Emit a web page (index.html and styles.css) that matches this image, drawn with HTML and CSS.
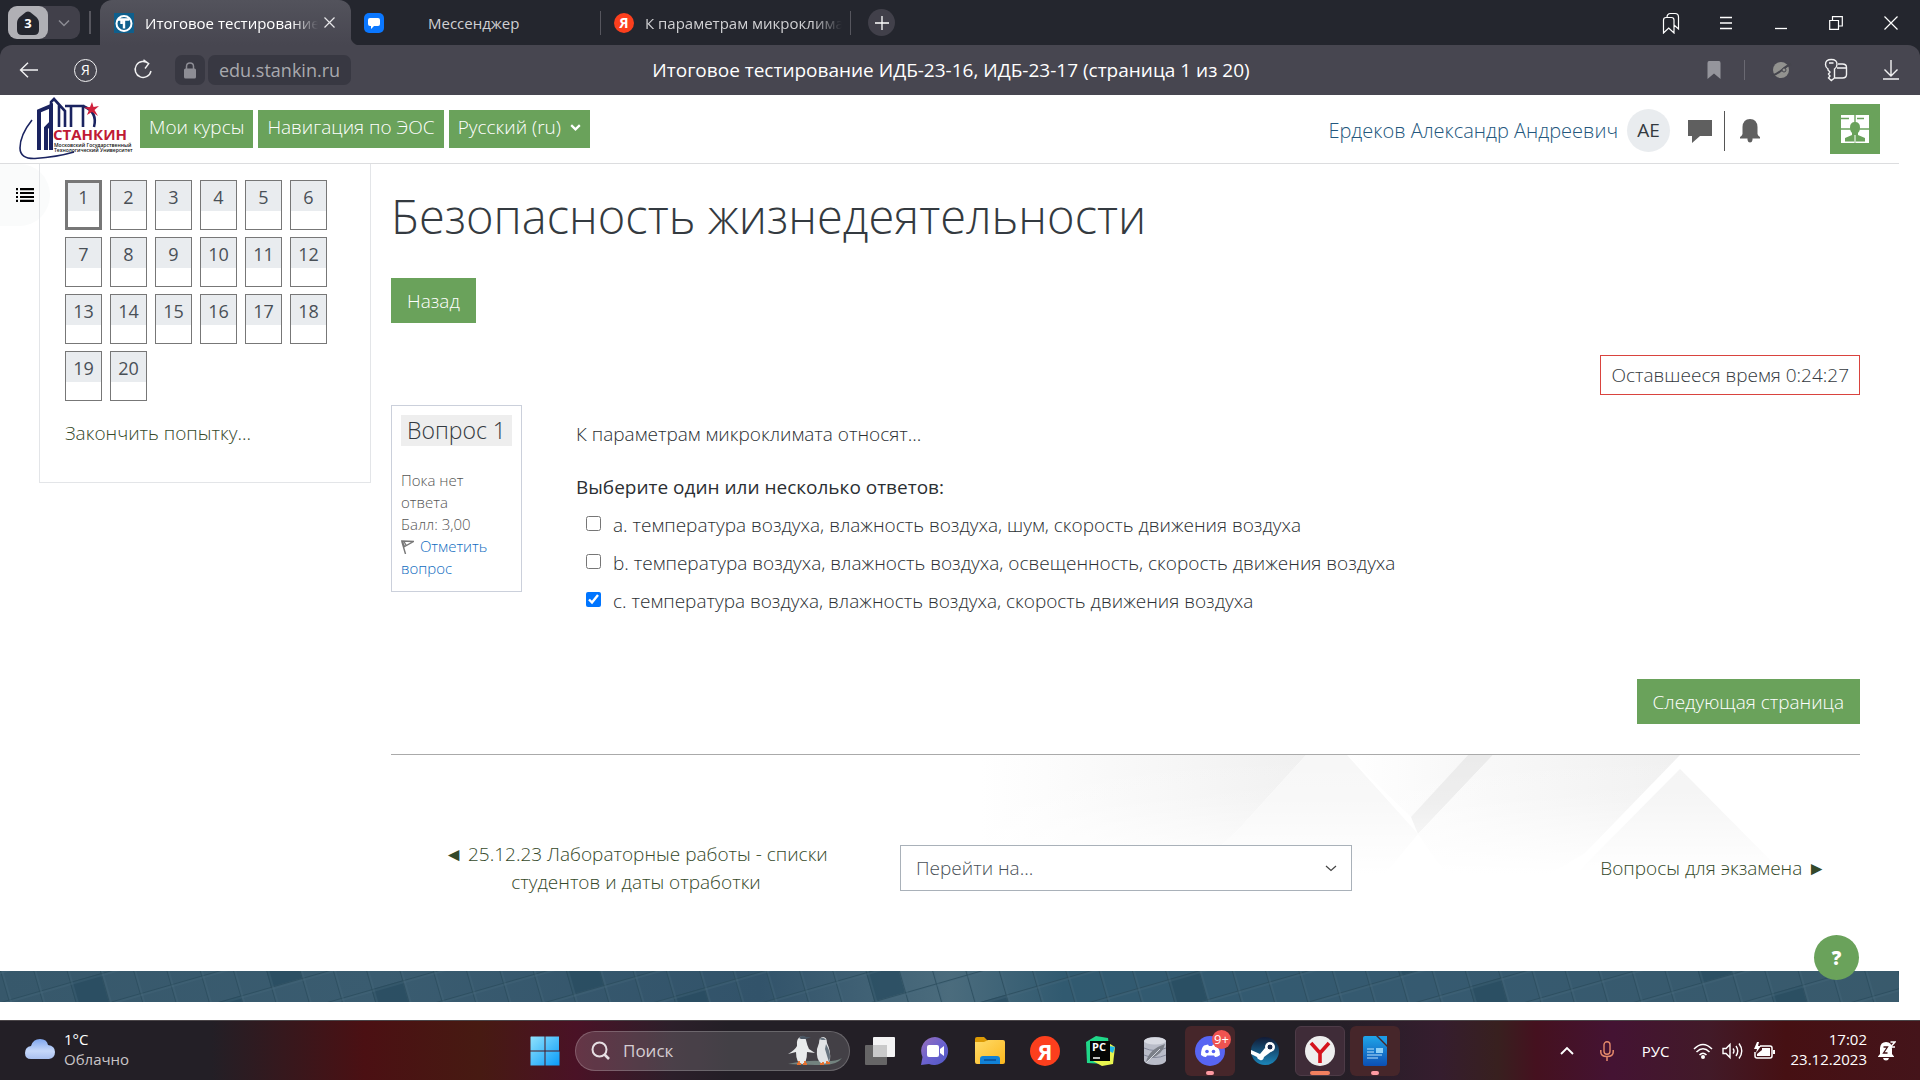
FILE: index.html
```html
<!DOCTYPE html>
<html lang="ru">
<head>
<meta charset="utf-8">
<meta name="viewport" content="width=device-width, initial-scale=1">
<title>Итоговое тестирование ИДБ-23-16, ИДБ-23-17 (страница 1 из 20)</title>
<link rel="stylesheet" href="styles.css">
</head>
<body>
<header class="browser">
  <div class="tabstrip">
    <div class="tab-group">
      <button class="tab-count" aria-label="Группы вкладок">
        <svg width="22" height="24" viewBox="0 0 22 24"><path d="M4 5 9 1Q11 0 13 1L18 5Q22 8 22 12V19Q22 24 17 24H5Q0 24 0 19V12Q0 8 4 5Z" fill="#24262e"/></svg>
        <span class="tab-number">3</span>
      </button>
      <button class="tab-more" aria-label="Список вкладок"><svg width="12" height="8" viewBox="0 0 12 8"><path d="M1 1.5 6 6.5 11 1.5" fill="none" stroke="#8b8b93" stroke-width="1.5"/></svg></button>
    </div>
    <span class="strip-line"></span>
    <div class="tab tab-active">
      <svg width="20" height="20" viewBox="0 0 20 20"><rect width="20" height="20" fill="#0f5f8c"/><circle cx="10" cy="10.500" r="7.500" fill="none" stroke="#fff" stroke-width="2"/><path d="M4 6.500H15M10 6.500V15.500M7.500 6.500V11" stroke="#fff" stroke-width="2.400" fill="none"/></svg>
      <span class="tab-title">Итоговое тестирование</span>
      <button class="tab-close" aria-label="Закрыть вкладку"><svg width="11" height="11" viewBox="0 0 11 11"><path d="M.5.5 10.500 10.500M10.500.5.5 10.500" stroke="#e8e8ea" stroke-width="1.200"/></svg></button>
    </div>
    <div class="tab tab-chat">
      <svg width="20" height="20" viewBox="0 0 20 20"><rect width="20" height="20" rx="5" fill="#0a77ff"/><path d="M6 5H14Q16 5 16 7V11Q16 13 14 13H10L7 16V13H6Q4 13 4 11V7Q4 5 6 5Z" fill="#fff"/></svg>
      <span class="tab-title">Мессенджер</span>
    </div>
    <div class="tab tab-search">
      <span class="ya-dot">Я</span>
      <span class="tab-title">К параметрам микроклимата</span>
    </div>
    <button class="tab-new" aria-label="Новая вкладка"><svg width="14" height="14" viewBox="0 0 14 14"><path d="M7 0V14M0 7H14" stroke="#fff" stroke-width="1.300"/></svg></button>
    <div class="window-buttons">
      <button aria-label="Коллекции"><svg width="18" height="22" viewBox="0 0 18 22"><path d="M1.500 21V8Q1.500 5.500 4 5.500H9.500Q12 5.500 12 8V21L6.700 16ZM5 5.500Q5 1.500 8.500 1.500H13Q16.500 1.500 16.500 5V17L12 13" fill="none" stroke="#fff" stroke-width="1.200"/></svg></button>
      <button aria-label="Меню"><svg width="14" height="14" viewBox="0 0 14 14"><path d="M1 1.500H13M1 7H13M1 12.500H13" stroke="#fff" stroke-width="1.300"/></svg></button>
      <button aria-label="Свернуть"><svg width="14" height="14" viewBox="0 0 14 14"><path d="M1 12.500H13" stroke="#fff" stroke-width="1.300"/></svg></button>
      <button aria-label="Развернуть"><svg width="14" height="14" viewBox="0 0 14 14"><path d="M.7 4.500H9.500V13.300H.7ZM3.500 4V.7H13.300V10H10" fill="none" stroke="#fff" stroke-width="1.200"/></svg></button>
      <button aria-label="Закрыть"><svg width="14" height="14" viewBox="0 0 14 14"><path d="M.5.5 13.500 13.500M13.500.5.5 13.500" stroke="#fff" stroke-width="1.200"/></svg></button>
    </div>
  </div>
  <div class="toolbar">
    <div class="tool-left">
      <div class="nav-buttons">
        <button aria-label="Назад"><svg width="20" height="16" viewBox="0 0 20 16"><path d="M19 8H1.500M9 .7 1.500 8 9 15.300" fill="none" stroke="#f2f2f3" stroke-width="1.400"/></svg></button>
        <button aria-label="Яндекс"><span class="ya-ring">Я</span></button>
        <button aria-label="Обновить"><svg width="20" height="22" viewBox="0 0 20 22"><path d="M15.500 4.500A8 8 0 1 0 18 12M10.500.7 15.700 4.700 12 9.500" fill="none" stroke="#f2f2f3" stroke-width="1.400"/></svg></button>
      </div>
      <div class="address">
        <span class="lock"><svg width="14" height="17" viewBox="0 0 14 17"><path d="M3.500 7V4.500Q3.500 1 7 1T10.500 4.500V7" fill="none" stroke="#8d8d95" stroke-width="1.500"/><rect x="1" y="6.500" width="12" height="10" rx="1.500" fill="#8d8d95"/></svg></span>
        <a class="host" href="#">edu.stankin.ru</a>
      </div>
    </div>
    <div class="page-title">Итоговое тестирование ИДБ-23-16, ИДБ-23-17 (страница 1 из 20)</div>
    <div class="tool-buttons">
      <button class="mark" aria-label="Закладка"><svg width="14" height="18" viewBox="0 0 14 18"><path d="M2 0H12Q13.500 0 13.500 2V18L7 12.500.5 18V2Q.5 0 2 0Z" fill="#95959c"/></svg></button>
      <span class="tool-line"></span>
      <button aria-label="Режим"><svg width="22" height="18" viewBox="0 0 22 18"><circle cx="11" cy="9" r="8" fill="#92928f"/><path d="M1 15Q6 14 12 9T21 3" fill="none" stroke="#45454d" stroke-width="2"/><circle cx="14" cy="9" r="2" fill="#92928f" stroke="#45454d"/></svg></button>
      <button aria-label="Пароли"><svg width="24" height="24" viewBox="0 0 24 24"><path d="M4 11Q1.500 9.500 1.500 6.500 1.500 1.500 7.300 1.500T13 6.500Q13 9.500 10.500 11V20L7.300 22.500 4.500 20 6 18 4.500 16 6 14 4 12ZM5 5H9.500M14 6H18.500Q22.500 6 22.500 9.500V16.500Q22.500 20 18.500 20H11M13 10H22.500" fill="none" stroke="#f2f2f3" stroke-width="1.400"/></svg></button>
      <button aria-label="Загрузки"><svg width="16" height="20" viewBox="0 0 16 20"><path d="M8 0V15.500M1.500 9.500 8 16 14.500 9.500M0 19H16" fill="none" stroke="#f2f2f3" stroke-width="1.400"/></svg></button>
    </div>
  </div>
</header>

<div class="site">
  <nav class="navbar">
    <a class="logo" href="#" aria-label="Станкин">
      <svg width="114" height="64" viewBox="0 0 114 64">
        <path d="M13 23Q1 38 1 51 1 62 16 61.500 38 60 55 55" fill="none" stroke="#1a2360" stroke-width="1.600"/>
        <path d="M20 53V14L32 9V53M32 26 27 31V53" fill="none" stroke="#1a2360" stroke-width="4"/>
        <path d="M32 9V5L35 2 46 14V30M40 8V30M52 9V30M46 9H64V30" fill="none" stroke="#1a2360" stroke-width="2.600"/>
        <path d="M64 9Q79 15 75 30" fill="none" stroke="#1a2360" stroke-width="2.500"/>
        <path d="M73 5 74.500 10 80 9 75.500 13 79 19 73 15 68 18 70 13 65 10.500 71 10Z" fill="#d0213c"/>
        <text class="logo-name" x="34" y="43" fill="#c01a35">СТАНКИН</text>
        <text class="logo-sub" x="35" y="50" fill="#111">Московский Государственный</text>
        <text class="logo-sub" x="35" y="55" fill="#111">Технологический Университет</text>
      </svg>
    </a>
    <div class="menu">
      <a class="menu-item" href="#">Мои курсы</a>
      <a class="menu-item" href="#">Навигация по ЭОС</a>
      <button class="menu-item">Русский (ru)<svg width="11" height="7" viewBox="0 0 11 7"><path d="M1.200 1.200 5.500 5.300 9.800 1.200" fill="none" stroke="#fff" stroke-width="2.300"/></svg></button>
    </div>
    <div class="user">
      <a class="user-name" href="#">Ердеков Александр Андреевич</a>
      <span class="avatar">АЕ</span>
      <button class="user-icon" aria-label="Сообщения"><svg width="24" height="24" viewBox="0 0 24 24"><path d="M0 1H24V17H12L4 24V17H0Z" fill="#5f5f5f"/></svg></button>
      <span class="user-line"></span>
      <button class="user-icon" aria-label="Уведомления"><svg width="20" height="24" viewBox="0 0 20 24"><path d="M10 0Q17 0 17.500 8V15Q18 17 20 18V19.500H12.500V21Q12 23.500 10 23.500T7.500 21V19.500H0V18Q2 17 2.500 15V8Q3 0 10 0Z" fill="#5f5f5f"/></svg></button>
    </div>
    <button class="badge" aria-label="Профиль"><svg width="28" height="28" viewBox="0 0 28 28"><rect width="28" height="28" fill="#fff"/><path d="M14 0V28M0 14H28M0 3.500H8M16 3.500H23" stroke="#6aa25b" stroke-width="1.400"/><path d="M14 7Q19 7 19 12.500 19 16 17 18V20L24 23V26.500H4V23L11 20V18Q9 16 9 12.500 9 7 14 7Z" fill="#6aa25b"/><path d="M14 20V28" stroke="#fff"/></svg></button>
  </nav>

  <div class="columns">
    <button class="drawer" aria-label="Открыть панель"><svg width="18" height="14" viewBox="0 0 18 14"><path d="M0 1.200H2M0 5H2M0 9H2M0 12.800H2M4 1.200H18M4 5H18M4 9H18M4 12.800H18" stroke="#000" stroke-width="2.200"/></svg></button>
    <aside class="quiz-nav">
      <div class="quiz-grid">
        <a class="num current" href="#">1</a><a class="num" href="#">2</a><a class="num" href="#">3</a><a class="num" href="#">4</a><a class="num" href="#">5</a><a class="num" href="#">6</a>
        <a class="num" href="#">7</a><a class="num" href="#">8</a><a class="num" href="#">9</a><a class="num" href="#">10</a><a class="num" href="#">11</a><a class="num" href="#">12</a>
        <a class="num" href="#">13</a><a class="num" href="#">14</a><a class="num" href="#">15</a><a class="num" href="#">16</a><a class="num" href="#">17</a><a class="num" href="#">18</a>
        <a class="num" href="#">19</a><a class="num" href="#">20</a>
      </div>
      <a class="finish" href="#">Закончить попытку...</a>
    </aside>

    <main class="content">
      <h1>Безопасность жизнедеятельности</h1>
      <button class="btn">Назад</button>
      <div class="timer">Оставшееся время 0:24:27</div>
      <form class="question">
        <div class="info">
          <h2>Вопрос 1</h2>
          <p>Пока нет ответа</p>
          <p>Балл: 3,00</p>
          <a href="#"><svg width="13" height="14" viewBox="0 0 13 14"><path d="M.7 1 4.500 14M1 1 12.500 1.500 3.500 6.500ZM2.500 1 5 5" fill="none" stroke="#777" stroke-width="1.400"/></svg> Отметить вопрос</a>
        </div>
        <fieldset class="answers">
          <legend>К параметрам микроклимата относят...</legend>
          <p class="prompt">Выберите один или несколько ответов:</p>
          <label><input type="checkbox"><span>a. температура воздуха, влажность воздуха, шум, скорость движения воздуха</span></label>
          <label><input type="checkbox"><span>b. температура воздуха, влажность воздуха, освещенность, скорость движения воздуха</span></label>
          <label><input type="checkbox" checked><span>c. температура воздуха, влажность воздуха, скорость движения воздуха</span></label>
        </fieldset>
      </form>
      <div class="next"><button class="btn">Следующая страница</button></div>
      <div class="activity">
        <svg class="facets" width="880" height="216" viewBox="0 0 880 216">
          <defs>
            <linearGradient id="fade-right"><stop offset="0" stop-color="#f0f0f0" stop-opacity="0"/><stop offset="1" stop-color="#f0f0f0"/></linearGradient>
            <linearGradient id="band"><stop offset="0" stop-color="#fbfbfb"/><stop offset="1" stop-color="#f0f0f0"/></linearGradient>
            <linearGradient id="veil" x2="0" y2="1"><stop offset="0" stop-color="#fff" stop-opacity="0"/><stop offset=".2" stop-color="#fff" stop-opacity=".15"/><stop offset=".55" stop-color="#fff"/></linearGradient>
          </defs>
          <path d="M0 0H326L259 74 210 120H0Z" fill="url(#fade-right)"/>
          <path d="M326 0H367L438 79 400 125H205L259 74Z" fill="#f7f7f7"/>
          <path d="M367 0H488L431 62Z" fill="url(#fade-right)" opacity=".5"/>
          <path d="M488 0H513L438 79 431 62Z" fill="#ebebeb"/>
          <path d="M513 0H700L605 98 560 125 470 125 438 79Z" fill="url(#band)"/>
          <path d="M700 14 800 115 600 115Z" fill="#f4f4f4"/>
          <rect width="880" height="216" fill="url(#veil)"/>
        </svg>
        <a class="prev-link" href="#">◄ 25.12.23 Лабораторные работы - списки студентов и даты отработки</a>
        <div class="jump"><select aria-label="Перейти на"><option>Перейти на...</option></select><svg width="12" height="7" viewBox="0 0 12 7"><path d="M1 1 6 5.500 11 1" fill="none" stroke="#444" stroke-width="1.200"/></svg></div>
        <a class="next-link" href="#">Вопросы для экзамена ►</a>
      </div>
    </main>
  </div>
  <footer class="footer">
    <svg width="100%" height="31">
      <defs>
        <linearGradient id="sea"><stop offset="0" stop-color="#37586b"/><stop offset=".2" stop-color="#3a5c70"/><stop offset=".4" stop-color="#32536a"/><stop offset=".5" stop-color="#4b6c7d"/><stop offset=".56" stop-color="#315a70"/><stop offset=".75" stop-color="#365a70"/><stop offset="1" stop-color="#395a6c"/></linearGradient>
        <pattern id="tiles" width="32" height="30" patternUnits="userSpaceOnUse" patternTransform="rotate(-16)"><path d="M0 .7H32M.7 0V30" stroke="#2b4c5d" stroke-width="1"/><path d="M0 2H32M2 0V30" stroke="#4a6c7d" stroke-width=".6"/></pattern>
        <pattern id="wells" width="288" height="90" patternUnits="userSpaceOnUse" patternTransform="rotate(-16)"><path d="M64 30H96V60H64ZM192 0H224V30H192ZM256 60H288V90H256Z" fill="#274a5e" opacity=".75"/></pattern>
      </defs>
      <rect width="100%" height="31" fill="url(#sea)"/><rect width="100%" height="31" fill="url(#wells)"/><rect width="100%" height="31" fill="url(#tiles)"/>
    </svg>
    <button class="help" aria-label="Помощь">?</button>
  </footer>
</div>

<div class="taskbar">
  <a class="weather" href="#">
    <svg width="30" height="20" viewBox="0 0 30 20"><defs><linearGradient id="cloud" x2="0" y2="1"><stop offset="0" stop-color="#7fa6ee"/><stop offset=".6" stop-color="#c6d8fa"/><stop offset="1" stop-color="#a9c0ef"/></linearGradient></defs><path d="M6 20Q0 20 0 14T6 7Q8 0 15 0T23 6Q30 7 30 13T24 20Z" fill="url(#cloud)"/></svg>
    <span class="weather-text"><b>1°C</b><i>Облачно</i></span>
  </a>
  <div class="apps">
    <button class="app" aria-label="Пуск"><svg width="30" height="30" viewBox="0 0 30 30"><defs><linearGradient id="win" x2="1" y2="1"><stop offset="0" stop-color="#8fe2fd"/><stop offset="1" stop-color="#0a9bf8"/></linearGradient></defs><path d="M1 .5H14.500V14.500H.5V1ZM15.500.5H29V14.500H15.500ZM.5 15.500H14.500V29.500H.5ZM15.500 15.500H29.500V29.500H15.500Z" fill="url(#win)"/></svg></button>
    <label class="search">
      <svg width="20" height="20" viewBox="0 0 20 20"><circle cx="8.500" cy="8.500" r="7" fill="none" stroke="#e6dfe3" stroke-width="2"/><path d="M13.500 13.500 18 18" stroke="#e6dfe3" stroke-width="2.600"/></svg>
      <input type="text" placeholder="Поиск" aria-label="Поиск">
      <svg width="56" height="32" viewBox="0 0 56 32"><path d="M1 29Q20 25 34 26T55 23Q50 30 36 30T1 29Z" fill="#73837f"/><path d="M10 11Q9 3 14 1.500L18 2 19 5Q20 10 22 14L28 18 20 17Q20 28 15.500 29 9 29 9 17L1 19Q8 15 10 11Z" fill="#e9ebec"/><path d="M12 3Q15-1 19 2L24 2 19 4 14 4Z" fill="#4a5663"/><path d="M32 8Q32 2 36 2T40 8Q44 16 43 25 40 30 34 28 29 25 30 14Z" fill="#e2e4e6"/><path d="M39 9Q45 19 42 27 40 21 38 14ZM32 4Q36 1 39 5L35 5Z" fill="#68747f"/><path d="M10 29H14M16 29H20M33 29H37M39 28H43M12 26V29M18 26V29M36 27V29M40 26V28" stroke="#e5702f" stroke-width="1.800"/></svg>
    </label>
    <button class="app" aria-label="Представление задач"><svg width="30" height="28" viewBox="0 0 30 28"><rect x="8" width="22" height="20" rx="1" fill="#f3f3f4"/><rect y="8" width="22" height="20" rx="1" fill="#777" opacity=".8"/><rect x="8" y="8" width="14" height="12" fill="#c9c9ca"/></svg></button>
    <button class="app" aria-label="Чат"><svg width="30" height="28" viewBox="0 0 30 28"><defs><linearGradient id="chat" x2="1" y2="1"><stop offset="0" stop-color="#9a6fb8"/><stop offset=".5" stop-color="#6c62cf"/><stop offset="1" stop-color="#4f57c4"/></linearGradient></defs><path d="M15 0A14 14 0 1 1 9 27L1 28 2.500 20A14 14 0 0 1 15 0Z" fill="url(#chat)"/><rect x="7" y="8" width="12" height="12" rx="2" fill="#fff"/><path d="M20 12 24 9V19L20 16Z" fill="#fff"/></svg></button>
    <button class="app" aria-label="Проводник"><svg width="30" height="27" viewBox="0 0 30 27"><defs><linearGradient id="folder" x2="1" y2="1"><stop offset="0" stop-color="#ffdb69"/><stop offset="1" stop-color="#fbb71d"/></linearGradient></defs><path d="M0 2Q0 0 2 0H9L13 4V8H0Z" fill="#dc9a05"/><path d="M0 5H9L13 3H28Q30 3 30 5V25Q30 27 28 27H2Q0 27 0 25Z" fill="url(#folder)"/><path d="M5 27V22Q5 19 8 19H22Q25 19 25 22V27Z" fill="#1181d6"/><path d="M9 23H21" stroke="#0a4d92" stroke-width="1.500"/></svg></button>
    <button class="app" aria-label="Яндекс"><span class="ya-big">Я</span></button>
    <button class="app" aria-label="PyCharm"><svg width="30" height="30" viewBox="0 0 30 30"><path d="M1 6 11 0 23 2 24 11 20 28 2 27Z" fill="#20d789"/><path d="M22 6 30 11 28 28 17 30 8 25Z" fill="#e9f650"/><path d="M24 10 30 11 28 17 24 15Z" fill="#1db8e8"/><rect x="5" y="5" width="20" height="20" fill="#050505"/><path d="M8 22H15" stroke="#fff" stroke-width="1.500"/><text class="pc" x="7" y="15" fill="#fff">PC</text></svg></button>
    <button class="app" aria-label="SQLite"><svg width="24" height="28" viewBox="0 0 24 28"><path d="M1 4V24Q3 28 12 28T23 24V4Q21 0 12 0T1 4Z" fill="#b9bcc8"/><ellipse cx="12" cy="4" rx="11" ry="3.500" fill="#d8dae2"/><path d="M1 11Q12 16 23 11M1 18Q12 23 23 18" fill="none" stroke="#83879a"/><path d="M3 25Q6 12 22 7 20 17 7 22Z" fill="#7b7f88"/><path d="M3 26 17 12" stroke="#d5d8e0"/></svg></button>
    <button class="app app-warm" aria-label="Discord"><svg width="30" height="30" viewBox="0 0 30 30"><circle cx="15" cy="15" r="15" fill="#5865f2"/><path d="M6 19Q6 12 9 9.500L13 8.500 14 10H17L18 8.500 21 9.500Q25 13 25 19 22 21.500 20 21L19 19.500H12L11 21Q9 21.500 6 19Z" fill="#fff"/><circle cx="12" cy="15.500" r="1.800" fill="#5865f2"/><circle cx="18.500" cy="15.500" r="1.800" fill="#5865f2"/></svg><span class="count">9+</span></button>
    <button class="app" aria-label="Steam"><svg width="30" height="28" viewBox="0 0 30 28"><defs><linearGradient id="steam" x2="0" y2="1"><stop offset="0" stop-color="#111a35"/><stop offset="1" stop-color="#1b86ba"/></linearGradient></defs><circle cx="15" cy="14" r="14" fill="url(#steam)"/><path d="M1 13 10 17 15 11 22 14 14 20Q13 24 10 23T7 20L1 17Z" fill="#fff"/><circle cx="20" cy="10" r="5" fill="#fff"/><circle cx="20" cy="10" r="3" fill="#17294b" stroke="#fff"/></svg></button>
    <button class="app app-open" aria-label="Яндекс Браузер"><svg width="30" height="30" viewBox="0 0 30 30"><circle cx="15" cy="15" r="15" fill="#eeeeee"/><path d="M6 7 15 17 24 7M15 16V27" fill="none" stroke="#d5121c" stroke-width="3.600"/></svg></button>
    <button class="app app-warm" aria-label="Writer"><svg width="24" height="30" viewBox="0 0 24 30"><defs><linearGradient id="doc" x2="0" y2="1"><stop offset="0" stop-color="#20a5e8"/><stop offset="1" stop-color="#0c4fb4"/></linearGradient></defs><path d="M2 0H13L24 11V28Q24 30 22 30H2Q0 30 0 28V2Q0 0 2 0Z" fill="url(#doc)"/><path d="M15 0H24V9Z" fill="#1c9be6"/><path d="M4 13H11M4 16H11M4 19H19M4 22H15" stroke="#b9e2fb" stroke-width="1.200"/><path d="M13 12H20V17H13Z" fill="#8fd0f7"/></svg></button>
  </div>
  <div class="tray">
    <button aria-label="Скрытые значки"><svg width="14" height="9" viewBox="0 0 14 9"><path d="M1 8 7 2 13 8" fill="none" stroke="#fff" stroke-width="1.900"/></svg></button>
    <button class="mic" aria-label="Микрофон"><svg width="14" height="20" viewBox="0 0 14 20"><rect x="4" y=".8" width="6" height="12.500" rx="3" fill="none" stroke="#e58a6b" stroke-width="1.400"/><path d="M.8 9V11Q.8 15.500 7 15.500T13.200 11V9M7 15.500V20" fill="none" stroke="#e58a6b" stroke-width="1.500"/></svg></button>
    <button class="lang">РУС</button>
    <button class="status" aria-label="Сеть, звук, батарея">
      <svg width="20" height="16" viewBox="0 0 20 16"><path d="M1 6Q10-3 19 6M3.500 9Q10 2.500 16.500 9M6.500 12Q10 8.500 13.500 12" fill="none" stroke="#fff" stroke-width="1.500"/><circle cx="10" cy="14" r="2" fill="#fff"/></svg>
      <svg width="22" height="18" viewBox="0 0 22 18"><path d="M1 6.500V11.500H4L8 15.500V2.500L4 6.500ZM11 6.500Q13 9 11 11.500M14 4Q17.500 9 14 14M17 1.500Q22.500 9 17 16.500" fill="none" stroke="#fff" stroke-width="1.400"/></svg>
      <svg width="22" height="18" viewBox="0 0 22 18"><path d="M7 4H17Q19 4 19 6V14Q19 16 17 16H4Q2 16 2 14V10" fill="none" stroke="#fff" stroke-width="1.500"/><path d="M9 6H17V14H4V12L9 8ZM20 8H22V12H20ZM4 0 1 7H4L3 11 8 4H5L6 0Z" fill="#fff"/></svg>
    </button>
    <button class="clock"><time>17:02</time><time>23.12.2023</time></button>
    <button aria-label="Уведомления"><svg width="18" height="20" viewBox="0 0 18 20"><path d="M8 1Q14 1 14 8V13L16 15.500V16H0V15.500L2 13V7Q2.500 1 8 1ZM5 17H11Q10.500 19.500 8 19.500T5 17Z" fill="#fff"/><path d="M5.500 6H9.500L5.500 12H9.500" fill="none" stroke="#431318" stroke-width="1.300"/><path d="M12.500 1H17L12.500 6H17" fill="none" stroke="#fff" stroke-width="1.500"/></svg></button>
  </div>
</div>
</body>
</html>
```
FILE: styles.css
```css
*,
*::before,
*::after {
  box-sizing: border-box;
}

body {
  margin: 0;
  min-height: 100vh;
  display: flex;
  flex-direction: column;
  background: #fff;
  color: #343a40;
  font: 300 19px/28px "Open Sans", "Noto Sans", sans-serif;
}

svg {
  display: block;
  flex: none;
}

button {
  display: flex;
  align-items: center;
  justify-content: center;
  padding: 0;
  border: 0;
  background: none;
  color: inherit;
  font: inherit;
}

a {
  color: inherit;
  text-decoration: none;
}

h1,
h2,
p {
  margin: 0;
  font-weight: inherit;
}

/* Browser frame */

.browser {
  background: #24262e;
  color: #fff;
  font-size: 15px;
  font-weight: 400;
  line-height: 22px;
}

.tabstrip {
  display: flex;
  align-items: center;
  height: 45px;
  padding: 0 2px 0 8px;
}

.tab-group {
  display: flex;
  width: 72px;
  height: 33px;
  border-radius: 9px;
  background: #41404a;
}

.tab-count {
  position: relative;
  width: 40px;
  border-radius: 9px;
  background: #b0b0b5;
}

.tab-number {
  position: absolute;
  inset: 0;
  font-size: 13px;
  font-weight: 700;
  line-height: 34px;
  text-align: center;
}

.tab-more {
  flex: 1;
}

.strip-line {
  width: 2px;
  height: 23px;
  margin: 0 9px;
  background: #56565e;
}

.tab {
  display: flex;
  align-items: center;
  gap: 11px;
  height: 45px;
  color: #d0d0d3;
}

.tab-title {
  flex: 1;
  overflow: hidden;
  white-space: nowrap;
}

.tab-active {
  position: relative;
  width: 251px;
  padding: 0 16px 0 14px;
  border-radius: 12px 12px 0 0;
  background: linear-gradient(#53535c, #474650);
  color: #fff;
}

.tab-active::after {
  content: "";
  position: absolute;
  left: 100%;
  bottom: 0;
  width: 9px;
  height: 9px;
  background: radial-gradient(circle at 100% 0, transparent 9px, #474650 10px);
}

.tab-active .tab-title,
.tab-search .tab-title {
  mask-image: linear-gradient(to right, #000 85%, transparent);
}

.tab-active .tab-title {
  margin-right: -5px;
}

.tab-chat {
  width: 249px;
  padding-left: 13px;
  gap: 44px;
}

.tab-search {
  width: 251px;
  padding: 0 9px 0 14px;
  background: linear-gradient(#56565e, #56565e) left center / 1px 24px no-repeat, linear-gradient(#56565e, #56565e) right center / 1px 24px no-repeat;
}

.ya-dot,
.ya-big {
  width: 20px;
  border-radius: 50%;
  background: #fc3f1d;
  color: #fff;
  font-size: 14px;
  font-weight: 700;
  line-height: 20px;
  text-align: center;
}

.tab-new {
  width: 27px;
  height: 27px;
  margin-left: 17px;
  border-radius: 50%;
  background: #41404a;
}

.window-buttons {
  display: flex;
  margin-left: auto;
}

.window-buttons button,
.tool-buttons button {
  width: 55px;
  height: 45px;
}

.toolbar {
  display: grid;
  grid-template-columns: 1fr auto 1fr;
  align-items: center;
  height: 50px;
  border-radius: 12px 12px 0 0;
  background: #474650;
}

.tool-left {
  display: flex;
  align-items: center;
}

.nav-buttons {
  display: flex;
}

.nav-buttons button {
  width: 57px;
  height: 50px;
}

.ya-ring {
  width: 23px;
  height: 23px;
  border: 1px solid #f2f2f3;
  border-radius: 50%;
  font-size: 14px;
  line-height: 20px;
}

.address {
  display: flex;
  gap: 3px;
  padding-left: 4px;
}

.lock,
.host {
  display: flex;
  align-items: center;
  justify-content: center;
  height: 30px;
  border-radius: 7px;
  background: #383842;
}

.lock {
  width: 30px;
}

.host {
  width: 143px;
  color: #a9a9ae;
  font-size: 18px;
}

.page-title {
  padding-right: 18px;
  font-size: 19px;
}

.tool-buttons {
  display: flex;
  align-items: center;
  justify-content: flex-end;
  padding-right: 2px;
}

.tool-buttons .mark {
  width: 44px;
}

.tool-line {
  width: 1px;
  height: 20px;
  margin: 0 8px;
  background: #6a6972;
}

/* Site header */

.site {
  flex: 1;
  margin-right: 21px;
}

.navbar {
  display: flex;
  align-items: center;
  height: 69px;
  padding: 0 19px;
  border-bottom: 1px solid #dcdddf;
}

.logo {
  margin-right: 7px;
}

.logo-name {
  font: 700 15px "Open Sans", sans-serif;
}

.logo-sub {
  font: 600 5px "Open Sans", sans-serif;
}

.menu {
  display: flex;
  gap: 5px;
}

.menu-item {
  display: flex;
  align-items: center;
  gap: 9px;
  height: 38px;
  padding: 0 9px 4px;
  background: #6aa25b;
  color: #fff;
  white-space: nowrap;
}

.user {
  display: flex;
  align-items: center;
  margin-left: auto;
  padding-top: 3px;
}

.user-name {
  color: #23577d;
  font-size: 20px;
}

.avatar {
  width: 43px;
  margin: 0 18px 0 9px;
  border-radius: 50%;
  background: #e9ecef;
  font-weight: 400;
  line-height: 43px;
  text-align: center;
}

.user-line {
  width: 1px;
  height: 40px;
  margin: 0 15px 0 12px;
  background: #555;
}

.badge {
  width: 50px;
  height: 50px;
  margin-left: 70px;
  background: #6aa25b;
}

/* Quiz navigation */

.columns {
  display: flex;
  position: relative;
}

.drawer {
  position: absolute;
  left: 0;
  top: 0;
  width: 50px;
  height: 62px;
  border-radius: 0 31px 31px 0;
  background: #fafbfb;
}

.quiz-nav {
  position: relative;
  flex: none;
  align-self: flex-start;
  width: 332px;
  margin-left: 39px;
  padding: 16px 25px 35px;
  border: 1px solid #e3e5e8;
  border-top: 0;
}

.quiz-grid {
  display: grid;
  grid-template-columns: repeat(6, 37px);
  gap: 7px 8px;
  margin-bottom: 18px;
}

.num {
  height: 50px;
  border: 1px solid #777;
  background: linear-gradient(#e9ecef 30px, #fff 30px);
  color: #495057;
  font-size: 18px;
  font-weight: 400;
  line-height: 33px;
  text-align: center;
}

.current {
  border-width: 3px;
  line-height: 29px;
  background: linear-gradient(#e9ecef 28px, #fff 28px);
}

.finish,
.activity a {
  color: #35492a;
}

/* Question */

.content {
  flex: 1;
  min-width: 0;
  padding: 22px 39px 0 20px;
}

h1 {
  margin-bottom: 32px;
  font-size: 47px;
  line-height: 60px;
}

.btn {
  height: 45px;
  padding: 0 16px;
  background: #6aa25b;
  color: #fff;
}

.timer {
  width: fit-content;
  margin: 32px 0 10px auto;
  padding: 5px 10px;
  border: 1px solid #d9433e;
}

.question {
  display: flex;
  align-items: flex-start;
}

.info {
  flex: none;
  width: 131px;
  padding: 9px 9px 12px;
  border: 1px solid #cbd0db;
  color: #555;
  font-size: 15px;
  line-height: 22px;
}

.info h2 {
  margin-bottom: 23px;
  background: #eee;
  color: #343a40;
  font-size: 23px;
  line-height: 31px;
  text-align: center;
}

.info a {
  color: #0f6cbf;
}

.info a svg {
  display: inline-block;
  margin-right: 2px;
  vertical-align: -2px;
}

.answers {
  display: grid;
  gap: 10px;
  margin: 0 0 0 54px;
  padding: 15px 0 0;
  border: 0;
  color: #2b2f33;
}

.answers legend {
  float: left;
  width: 100%;
  padding: 0;
}

.prompt {
  margin: 15px 0 0;
  font-weight: 400;
}

.answers label {
  display: flex;
  gap: 12px;
  padding-left: 10px;
}

.answers input {
  width: 15px;
  height: 15px;
  margin: 5px 0 0;
  accent-color: #0075ff;
}

.next {
  display: flex;
  justify-content: flex-end;
  margin-top: 64px;
}

.activity {
  display: grid;
  grid-template-columns: 490px 452px 1fr;
  align-items: center;
  gap: 19px;
  position: relative;
  height: 217px;
  margin-top: 30px;
  border-top: 1px solid #aaa;
  padding: 10px 34px 0 0;
}

.facets {
  position: absolute;
  right: 0;
  top: 0;
}

.activity a,
.jump {
  position: relative;
}

.prev-link {
  padding: 0 40px;
  text-align: center;
}

.next-link {
  text-align: right;
}

.jump {
  display: grid;
  align-items: center;
}

.jump select {
  grid-area: 1 / 1;
  appearance: none;
  height: 46px;
  padding: 0 15px;
  border: 1px solid #a9b1b9;
  border-radius: 0;
  background: #fff;
  color: #495057;
  font: inherit;
}

.jump svg {
  grid-area: 1 / 1;
  justify-self: end;
  margin-right: 15px;
  pointer-events: none;
}

.footer {
  position: relative;
  margin-bottom: 18px;
}

.help {
  position: absolute;
  right: 40px;
  bottom: 22px;
  width: 45px;
  height: 45px;
  border-radius: 50%;
  background: #6aa25b;
  color: #fff;
  font-weight: 800;
}

/* Taskbar */

.taskbar {
  display: grid;
  grid-template-columns: 1fr auto 1fr;
  align-items: center;
  height: 60px;
  border-top: 1px solid #4a4548;
  background: linear-gradient(to right, #231f26 11%, #4b1013 19%, #471a12 25%, #4a1226 30%, #2c1f2a 35%, #231f26 38%, #231f26 69%, #351d2e 75%, #38201f 78%, #45111f 80%, #441333 84%, #421a28 89%, #461013 93%, #44141a);
  color: #fff;
  font-size: 15px;
  font-weight: 400;
  line-height: 20px;
}

.weather {
  display: flex;
  align-items: center;
  gap: 9px;
  padding: 0 0 4px 25px;
}

.weather-text {
  display: grid;
}

.weather b,
.weather i {
  font-style: normal;
  font-weight: 400;
}

.weather i {
  color: #c9c5c8;
}

.apps {
  display: flex;
  gap: 5px;
}

.app {
  position: relative;
  width: 50px;
  height: 50px;
  border-radius: 6px;
}

.app-warm {
  background: #46262a;
}

.app-open {
  background: #3f2c38;
  border: 1px solid #4d3b47;
}

.app-warm::after,
.app-open::after {
  content: "";
  position: absolute;
  bottom: 1px;
  width: 8px;
  height: 4px;
  border-radius: 2px;
  background: #ff9aa2;
}

.app-open::after {
  bottom: 0;
  width: 20px;
  background: #f2805f;
}

.ya-big {
  width: 30px;
  font-size: 22px;
  line-height: 30px;
}

.pc {
  font: 700 11px "Open Sans", sans-serif;
}

.count {
  position: absolute;
  right: 4px;
  top: 4px;
  width: 19px;
  border-radius: 50%;
  background: #ef5350;
  font-size: 13px;
  line-height: 19px;
}

.search {
  display: flex;
  align-items: center;
  gap: 12px;
  width: 275px;
  height: 40px;
  margin-top: 5px;
  padding: 0 6px 0 15px;
  border: 1px solid #ffffff33;
  border-radius: 20px;
  background: #ffffff26;
}

.search input {
  flex: 1;
  min-width: 0;
  padding: 0;
  border: 0;
  background: none;
  font: inherit;
  font-size: 17px;
}

.search input::placeholder {
  color: #d5cdd2;
}

.tray {
  display: flex;
  align-items: center;
  justify-content: flex-end;
  padding-right: 24px;
}

.mic {
  margin: 0 28px 0 26px;
}

.status {
  gap: 9px;
  margin: 0 16px 0 23px;
}

.clock {
  display: grid;
  justify-items: end;
  margin-right: 11px;
  padding-bottom: 4px;
}
```
